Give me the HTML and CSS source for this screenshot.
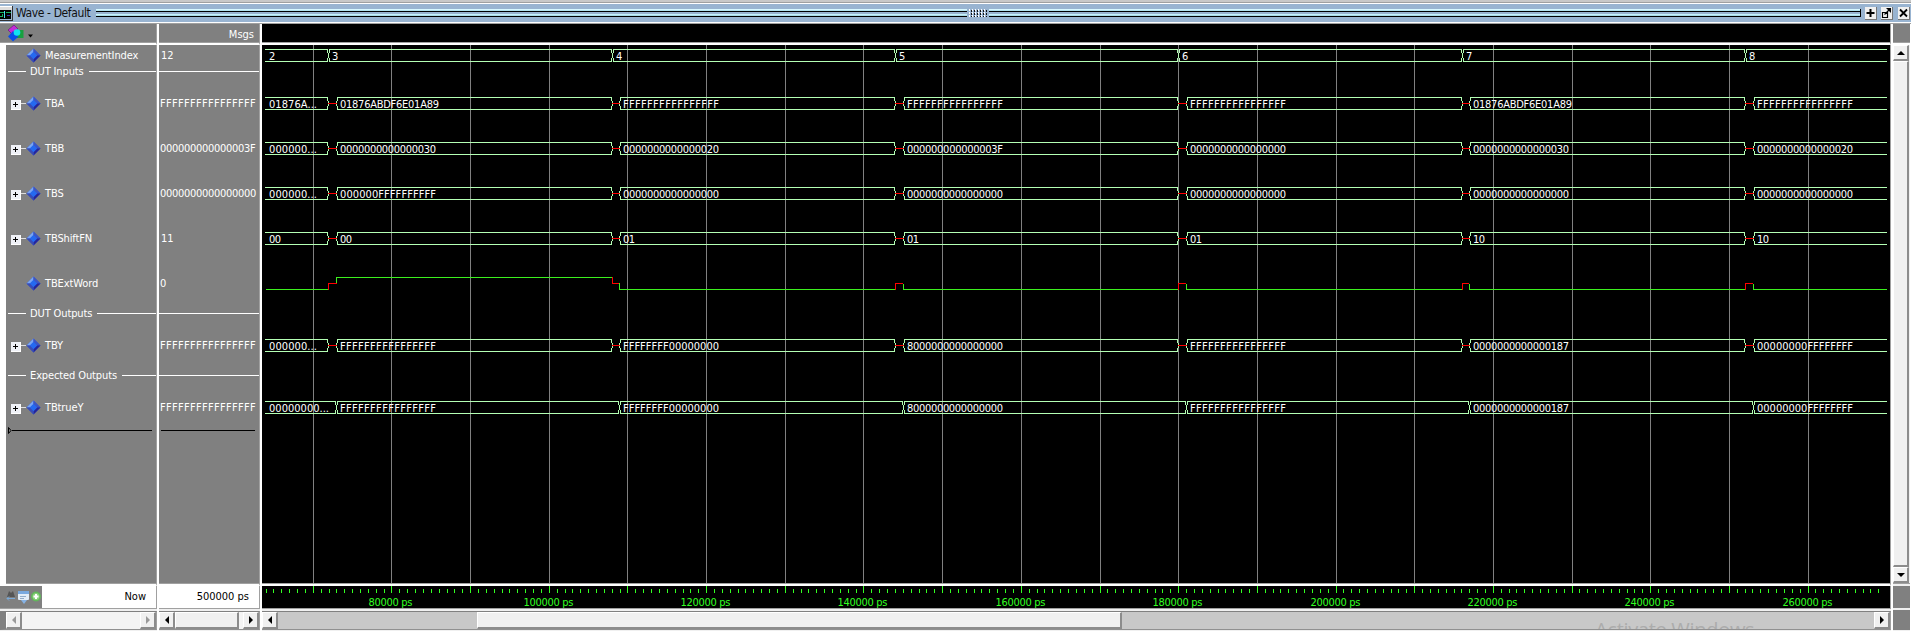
FILE: index.html
```html
<!DOCTYPE html>
<html lang="en">
<head>
<meta charset="utf-8">
<title>Wave - Default</title>
<link rel="stylesheet" href="styles.css">
</head>
<body>
<svg class="defs" width="0" height="0">
  <symbol id="gem" viewBox="0 0 16 16">
    <path d="M8 0.5 15.5 8 8 15.5 0.5 8z" fill="#3355cc"/>
    <path d="M8 0.5 8 4.5 4.5 8 0.5 8z" fill="#7aa6f2"/>
    <path d="M8 0.5 15.5 8H11.5L8 4.5z" fill="#3c55c4"/>
    <path d="M15.5 8 8 15.5V11.5L11.5 8z" fill="#25259a"/>
    <path d="M0.5 8 8 15.5V11.5L4.5 8z" fill="#3a4cb4"/>
    <path d="M8 4 12 8 8 12 4 8z" fill="#2569f0"/>
  </symbol>
</svg>
<div class="window">
  <header class="titlebar">
    <svg class="app-icon" width="13" height="15" shape-rendering="crispEdges">
      <path d="M0 0h12v1H0z" fill="#fff"/><path d="M0 1h12v3H0z" fill="#ddd"/><path d="M0 4h11v9H0z" fill="#000"/>
      <path d="M0 6.5H4M4.5 6v5M6 6.5h5M0 10.5h2v-3" stroke="#18b060" fill="none"/><path d="M4.5 5v7" stroke="#4de" /><path d="M7 9.5h3" stroke="#33a"/>
      <path d="M12.500 0v15M0 14.500h13" stroke="#333"/>
    </svg>
    <span class="title">Wave - Default</span>
    <span class="grip"></span><span class="dots"></span><span class="grip"></span>
    <span class="win-btn"><svg width="11" height="12"><path d="M5.500 2v8M1.500 6h8" stroke="#000" stroke-width="2"/></svg></span>
    <span class="win-btn mid"><svg width="11" height="12"><path d="M1.500 5.500h5v5h-5z M3.500 7.500 8 3" stroke="#000" fill="none" stroke-width="1.200"/><path d="M5 1h5v5z"/></svg></span>
    <span class="win-btn last"><svg width="11" height="12"><path d="M2 2.500 9 9.500M9 2.500 2 9.500" stroke="#000" stroke-width="1.800"/></svg></span>
  </header>
  <main class="panes">
    <section class="pane names">
      <div class="head">
        <svg width="30" height="18"><path d="M1 6 7 1 11 5 5 10z" fill="#c42ad8" stroke="#601070" stroke-width=".6"/><path d="M9 6h7.500v8H9z" fill="#18a040"/><path d="M6 7 11.500 12.500 6 17.500 1 12.500z" fill="#0a4fe8"/><circle cx="10" cy="8.500" r="3.300" fill="#12e2f2"/><path d="M21 10.500h5l-2.500 3z" fill="#000"/></svg>
      </div>
      <div class="body">
        <div class="row first"><svg class="gem"><use href="#gem"/></svg><span>MeasurementIndex</span></div>
        <div class="sep"><span>DUT Inputs</span></div>
        <div class="row near tree"><i class="plus"></i><svg class="gem"><use href="#gem"/></svg><span>TBA</span></div>
        <div class="row tree"><i class="plus"></i><svg class="gem"><use href="#gem"/></svg><span>TBB</span></div>
        <div class="row tree"><i class="plus"></i><svg class="gem"><use href="#gem"/></svg><span>TBS</span></div>
        <div class="row tree"><i class="plus"></i><svg class="gem"><use href="#gem"/></svg><span>TBShiftFN</span></div>
        <div class="row"><svg class="gem"><use href="#gem"/></svg><span>TBExtWord</span></div>
        <div class="sep spaced"><span>DUT Outputs</span></div>
        <div class="row near tree"><i class="plus"></i><svg class="gem"><use href="#gem"/></svg><span>TBY</span></div>
        <div class="sep spaced"><span>Expected Outputs</span></div>
        <div class="row near tree"><i class="plus"></i><svg class="gem"><use href="#gem"/></svg><span>TBtrueY</span></div>
        <div class="end"><svg width="4" height="7"><path d="M.5 .5 3 3.500 .5 6.500z" fill="none" stroke="#000"/></svg></div>
      </div>
      <div class="now">
        <div class="tools">
          <svg width="36" height="18">
            <path d="M1 9 3 3 5 5 7 3 9 9z" fill="#555"/><path d="M1 10.500h8M3 8.500 1 10.500l2 2" stroke="#79a9d8" fill="none"/>
            <rect x="12" y="3" width="11" height="9" rx="1" fill="#e2edf8"/><rect x="12" y="3" width="11" height="3" fill="#78a9e0"/><path d="M14 8.500h6M14 10.500h4" stroke="#91acc9"/><path d="M15 12h6l-3 4z" fill="#87b3e5"/>
            <circle cx="30" cy="8.500" r="5" fill="#62b65b"/><circle cx="30" cy="8.500" r="3.500" fill="#8bd37c"/><path d="M30 6v5M27.500 8.500h5" stroke="#fff" stroke-width="2"/>
          </svg>
        </div>
        <span>Now</span>
      </div>
      <div class="hscroll disabled"><b class="btn left"></b><i class="track"></i><b class="btn right"></b></div>
    </section>
    <section class="pane values">
      <div class="head"><span>Msgs</span></div>
      <div class="body">
        <div class="row first small"><span>12</span></div>
        <div class="sep"></div>
        <div class="row near f"><span>FFFFFFFFFFFFFFFF</span></div>
        <div class="row d"><span>000000000000003F</span></div>
        <div class="row d"><span>0000000000000000</span></div>
        <div class="row small"><span>11</span></div>
        <div class="row"><span>0</span></div>
        <div class="sep spaced"></div>
        <div class="row near f"><span>FFFFFFFFFFFFFFFF</span></div>
        <div class="sep spaced"></div>
        <div class="row near f"><span>FFFFFFFFFFFFFFFF</span></div>
        <div class="end"></div>
      </div>
      <div class="now"><span>500000 ps</span></div>
      <div class="hscroll"><b class="btn left"></b><i class="thumb"></i><i class="track"></i><b class="btn right"></b></div>
    </section>
    <section class="pane waves">
      <div class="head"></div>
      <div class="body"><svg id="waves" width="1628" height="538" shape-rendering="crispEdges"></svg></div>
      <div class="ruler"><svg id="ruler" width="1628" height="22" shape-rendering="crispEdges"></svg></div>
      <div class="hscroll gray"><b class="btn left"></b><i class="track before"></i><i class="thumb"></i><i class="track"><span class="watermark">Activate Windows</span></i><b class="btn right"></b></div>
    </section>
    <section class="side">
      <div class="head"></div>
      <div class="vscroll"><b class="btn up"></b><i class="thumb"></i><b class="btn down"></b></div>
      <div class="block"></div>
      <div class="block low"></div>
    </section>
  </main>
</div>
<script src="wave.js"></script>
</body>
</html>
```

FILE: styles.css
```css
* { box-sizing: border-box; }
body {
  margin: 0;
  overflow: hidden;
  background: #f0f0f0;
  font: 11px/16px "DejaVu Sans Condensed", "DejaVu Sans", sans-serif;
}
.defs { position: absolute; }
.window { width: 1911px; height: 631px; display: flex; flex-direction: column; border-top: 2px solid #c8c8c8; overflow: hidden; }

/* Title bar */
.titlebar {
  display: flex;
  align-items: center;
  height: 22px;
  flex: none;
  background: #99b4d1;
  border-top: 1px solid #a0a0a0;
  border-bottom: 1px solid #a0a0a0;
  box-shadow: inset 0 1px #fff, inset 0 -1px #fff;
}
.app-icon { flex: none; margin-top: 1px; }
.title { width: 78px; margin: 0 5px 0 3px; white-space: nowrap; font-size: 12px; letter-spacing: -.38px; color: #111; }
.grip {
  height: 8px;
  flex: 1;
  border-right: 1px solid #000;
  background: linear-gradient(#d8f8ff 0 1px, #b4e4ee 1px 2px, #000 2px 3px, #99b4d1 3px 5px, #c9f3fa 5px 6px, #a8dae6 6px 7px, #000 7px 8px);
}
.title + .grip { flex: 0 0 871px; margin-left: -3px; border: 0; }
.dots {
  width: 18px;
  height: 8px;
  margin: 0 2px;
  background: conic-gradient(#99b4d1 25%, #111 0 50%, #99b4d1 0 75%, #fff 0) 0 0 / 3px 3px;
}
.win-btn { width: 12px; height: 13px; margin-left: 4px; background: #f0f0f0; border-right: 1px solid #777; border-bottom: 1px solid #777; display: flex; }
.win-btn.last { margin-right: 1px; margin-left: 5px; }

/* Panes */
.panes { display: flex; flex: 1; min-height: 0; }
.pane { display: flex; flex-direction: column; flex: none; border-right: 2px solid #fff; }
.pane > div { border-right: 1px solid #a0a0a0; }
.names { width: 159px; }
.values { width: 103px; }
.waves { width: 1631px; }
.head { height: 21px; flex: none; background: #808080; color: #fff; border-bottom: 2px solid #fff; box-shadow: inset 0 -1px #a0a0a0; }
.names .head svg { margin-left: 7px; display: block; }
.values .head { text-align: right; padding: 3px 5px 0 0; line-height: 15px; }
.body { height: 541px; flex: none; background: #808080; color: #fff; border-bottom: 2px solid #fff; box-shadow: inset 0 -1px #a0a0a0; overflow: hidden; white-space: nowrap; }
.names .body { border-left: 6px solid #fff; }
.waves .head, .waves .body, .ruler { background: #000; }
.waves svg { display: block; }

.row { display: flex; align-items: center; height: 16px; margin-top: 29px; letter-spacing: -.12px; }
.row span, .sep span { padding-top: 2px; }
.row.first { margin-top: 2px; }
.row.near { margin-top: 16px; }
.names .row { padding-left: 20px; }
.names .row.tree { padding-left: 5px; }
.gem { width: 15px; height: 15px; flex: none; margin-right: 4px; }
.plus {
  width: 10px; height: 10px; margin: 3px 0 0; flex: none;
  background: linear-gradient(#000, #000) 50% 50% / 5px 1px no-repeat, linear-gradient(#000, #000) 50% 50% / 1px 5px no-repeat, #eef0f6;
  border: solid #fff; border-width: 0 1px 1px 0;
}
.tree::before { content: ""; order: 1; width: 5px; height: 1px; background: #ddd; }
.tree .gem { order: 2; }
.tree span { order: 3; }
.sep { display: flex; align-items: center; height: 16px; }
.sep.spaced { margin-top: 14px; }
.sep::after { content: ""; flex: 1; height: 1px; background: #fff; }
.names .sep::before { content: ""; width: 18px; height: 1px; margin: 0 4px 0 2px; background: #fff; }
.names .sep span { margin-right: 5px; letter-spacing: -.12px; }
.values .row { padding-left: 1px; }
.values .row.small { padding-left: 2px; }
.values .f { letter-spacing: .31px; }
.values .d { letter-spacing: -.3px; }
.end { display: flex; align-items: center; height: 7px; margin: 12px 4px 0 2px; }
.end::after { content: ""; flex: 1; height: 1px; background: #000; }

/* Cursor row */
.now { display: flex; justify-content: flex-end; align-items: center; height: 23px; flex: none; background: #fff; color: #000; padding-right: 10px; border-bottom: 1px solid #a0a0a0; }
.tools { width: 42px; height: 22px; margin-right: auto; padding: 2px 0 0 6px; background: #808080; }
.ruler { height: 23px; flex: none; border-bottom: 1px solid #a0a0a0; }

/* Scrollbars */
.hscroll { display: flex; height: 19px; flex: none; margin-top: 2px; border-top: 1px solid #808080; border-bottom: 1px solid #909090; }
.names .hscroll { border-left: 6px solid #808080; }
.btn { width: 16px; flex: none; display: grid; place-items: center; background: #f0f0f0; border: solid; border-width: 1px 2px 2px 1px; border-color: #fff #8c8c8c #8c8c8c #fff; }
.btn::after { content: ""; border: 4px solid transparent; }
.left::after { border-right-color: #000; margin-right: 4px; }
.right::after { border-left-color: #000; margin-left: 4px; }
.up::after { border-bottom-color: #000; margin-bottom: 4px; }
.down::after { border-top-color: #000; margin-top: 4px; }
.disabled .left::after { border-right-color: #999; }
.disabled .right::after { border-left-color: #999; }
.track { flex: 1; background: #f4f4f4; overflow: hidden; }
.gray .track { background: #c8c8c8; }
.gray .track.before { flex: 0 0 199px; }
.thumb { display: block; background: #f0f0f0; border: solid; border-width: 1px 2px 2px 1px; border-color: #fff #8c8c8c #8c8c8c #fff; }
.values .thumb { width: 64px; }
.gray .thumb { width: 645px; }
.watermark { display: block; margin: 5px 0 0 473px; font: 20px/26px "Open Sans", sans-serif; letter-spacing: -.3px; color: #acacac; white-space: nowrap; }

.side { width: 18px; display: flex; flex-direction: column; border-right: 1px solid #fff; }
.vscroll { height: 539px; display: flex; flex-direction: column; border-bottom: 1px solid #a0a0a0; }
.vscroll .btn { width: 16px; height: 16px; }
.vscroll .thumb { width: 16px; flex: 1; }
.block { height: 22px; margin-top: 2px; background: #808080; }
.block.low { height: 20px; }

/* Waveforms */
.bus { stroke: #b4ffb4; fill: none; }
.undef { stroke: #f00; fill: none; }
.bit { stroke: #3cf01e; fill: none; }
.grid { stroke: #808080; }
.val { fill: #fff; }
.tick { stroke: #3f2; fill: none; }
.time { fill: #3f2; }
```

FILE: wave.js
```js
// Origin of the wave pane in window coordinates
const X0 = 262, Y0 = 45, LEFT = 265, RIGHT = 1887;
const edges = [[328, 336], [612, 619], [895, 903], [1178, 1186], [1462, 1469], [1745, 1753]];
const F = "F".repeat(16), Z = "0".repeat(16);
const hex = s => s.padStart(16, "0");
const A = "01876ABDF6E01A89";
const signals = [
  { y: 49, kind: "index", v: ["2", "3", "4", "5", "6", "7", "8"] },
  { y: 97, kind: "gap", v: ["01876A...", A, F, F, F, A, F] },
  { y: 142, kind: "gap", v: ["000000...", hex("30"), hex("20"), hex("3F"), Z, hex("30"), hex("20")] },
  { y: 187, kind: "gap", v: ["000000...", "000000FFFFFFFFFF", Z, Z, Z, Z, Z] },
  { y: 232, kind: "gap", v: ["00", "00", "01", "01", "01", "10", "10"] },
  { y: 339, kind: "gap", v: ["000000...", F, "FFFFFFFF00000000", "8000000000000000", F, hex("187"), "00000000FFFFFFFF"] },
  { y: 401, kind: "late", v: ["00000000...", F, "FFFFFFFF00000000", "8000000000000000", F, hex("187"), "00000000FFFFFFFF"] }
];
const path = (c, d) => `<path class="${c}" d="${d}"/>`;
const text = (c, x, y, s, w, anchor = "start") =>
  `<text class="${c}" x="${x}" y="${y}" textLength="${w}" text-anchor="${anchor}">${s}</text>`;
const width = s => s.length === 16 ? (s === A ? 99 : 96) : [...s].reduce((n, c) => n + (c === "." ? 4 : 6), 0);

let out = "";
for (let k = 0; k < 20; k++) {
  const x = Math.floor(313.3 + 78.67 * k) + 0.5;
  out += path("grid", `M${x} 45V583`);
}
for (const { y, kind, v } of signals) {
  let x = LEFT;
  const t = y + 0.5, b = y + 12.5;
  v.forEach((s, i) => {
    const last = i === edges.length;
    let [n1, n2] = last ? [RIGHT, RIGHT] : edges[i];
    if (kind === "index") n2 = n1;
    if (kind === "late") n1 = n2;
    out += path("bus", `M${x} ${t}H${n1}M${x} ${b}H${n1}`);
    if (!last) {
      const l = n1 - 0.5, r = n2 + 1.5;
      out += path("bus", `M${l} ${y}v4M${l} ${y + 9}v4M${n1 + 0.5} ${y + 4}v5M${n2 + 0.5} ${y + 4}v5M${r} ${y}v4M${r} ${y + 9}v4`);
      if (n1 !== n2) out += path("undef", `M${n1} ${y + 6.5}H${n2 + 1}`);
    }
    out += text("val", i ? x + 3 : x + 4, y + 11, s, width(s));
    x = n2 + 1;
  });
}
// Single-bit signal: low, high between the first two edges, then low again
out += path("bit", "M266 289.5H328M336.5 284V277.5H612M619.5 283V289.5H895");
out += path("undef", "M328.5 290V283.5H337M612.5 277V283.5H619");
for (let i = 2; i < edges.length; i++) {
  const [a, b] = edges[i], end = i + 1 < edges.length ? edges[i + 1][0] : RIGHT;
  out += path("undef", `M${a + 0.5} 290V283.5H${b}`) + path("bit", `M${b + 0.5} 284V289.5H${end}`);
}
document.getElementById("waves").innerHTML = `<g transform="translate(${-X0} ${-Y0})">${out}</g>`;

let r = "";
for (let k = -6; k < 200; k++) {
  const x = Math.floor(313.3 + 7.867 * k) + 0.5 - X0;
  r += path("tick", k % 10 ? `M${x} 3v4` : `M${x} 0v7`);
}
for (let k = 0; k < 10; k++) {
  const label = `${80000 + 20000 * k} ps`;
  r += text("time", Math.floor(391.97 + 157.34 * k) - X0 - 0.5, 20, label, k ? 50 : 44, "middle");
}
document.getElementById("ruler").innerHTML = r;
```
